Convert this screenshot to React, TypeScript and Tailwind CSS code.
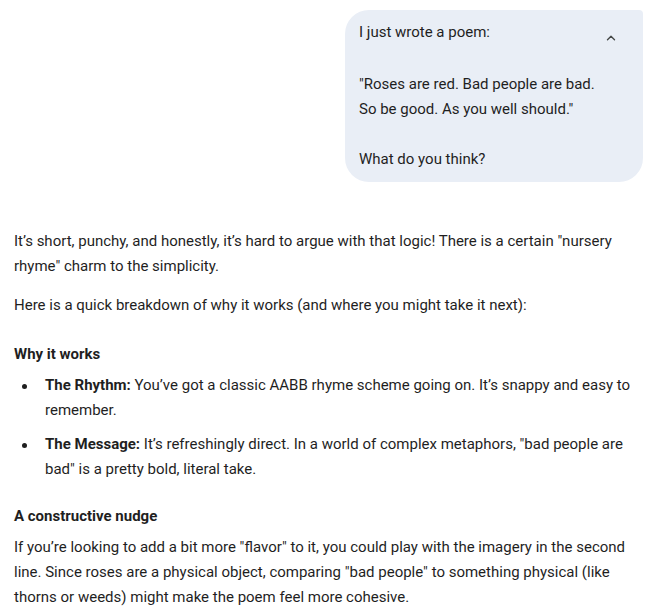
import { ChevronUp } from 'lucide-react';

const App = () => {
  return (
    <div className="min-h-screen bg-white text-[#1f1f1f] font-['Roboto',sans-serif] text-[15px] leading-[25px]">
      <div className="flex justify-end pt-[10px] pr-[5px]">
        <div className="relative w-[298px] rounded-[24px] rounded-tr-[4px] bg-[#e9eef6] pl-[14px] pr-[40px] pt-[10px] pb-[10px]">
          <button className="absolute right-[25px] top-[21px] text-[#444746]">
            <ChevronUp className="h-[14px] w-[14px]" strokeWidth={2.4} />
          </button>
          <p>I just wrote a poem:</p>
          <p className="h-[27px]" />
          <p>"Roses are red. Bad people are bad.</p>
          <p>So be good. As you well should."</p>
          <p className="h-[25px]" />
          <p>What do you think?</p>
        </div>
      </div>

      <main className="px-[14px] pt-[47px]">
        <p>
          It’s short, punchy, and honestly, it’s hard to argue with that logic! There is a certain "nursery
          rhyme" charm to the simplicity.
        </p>
        <p className="mt-[14px]">
          Here is a quick breakdown of why it works (and where you might take it next):
        </p>

        <h3 className="mt-[24px] font-bold">Why it works</h3>
        <ul className="mt-[6px] flex flex-col gap-[9px]">
          <li className="flex">
            <span className="flex w-[31px] shrink-0 items-start pl-[8px] pt-[11px]">
              <span className="h-[5px] w-[5px] rounded-full bg-[#1f1f1f]" />
            </span>
            <p>
              <strong>The Rhythm:</strong> You’ve got a classic AABB rhyme scheme going on. It’s snappy and
              easy to remember.
            </p>
          </li>
          <li className="flex">
            <span className="flex w-[31px] shrink-0 items-start pl-[8px] pt-[11px]">
              <span className="h-[5px] w-[5px] rounded-full bg-[#1f1f1f]" />
            </span>
            <p>
              <strong>The Message:</strong> It’s refreshingly direct. In a world of complex metaphors, "bad
              people are bad" is a pretty bold, literal take.
            </p>
          </li>
        </ul>

        <h3 className="mt-[22px] font-bold">A constructive nudge</h3>
        <p className="mt-[6px]">
          If you’re looking to add a bit more "flavor" to it, you could play with the imagery in the second
          line. Since roses are a physical object, comparing "bad people" to something physical (like
          thorns or weeds) might make the poem feel more cohesive.
        </p>
      </main>
    </div>
  );
};

export default App;
